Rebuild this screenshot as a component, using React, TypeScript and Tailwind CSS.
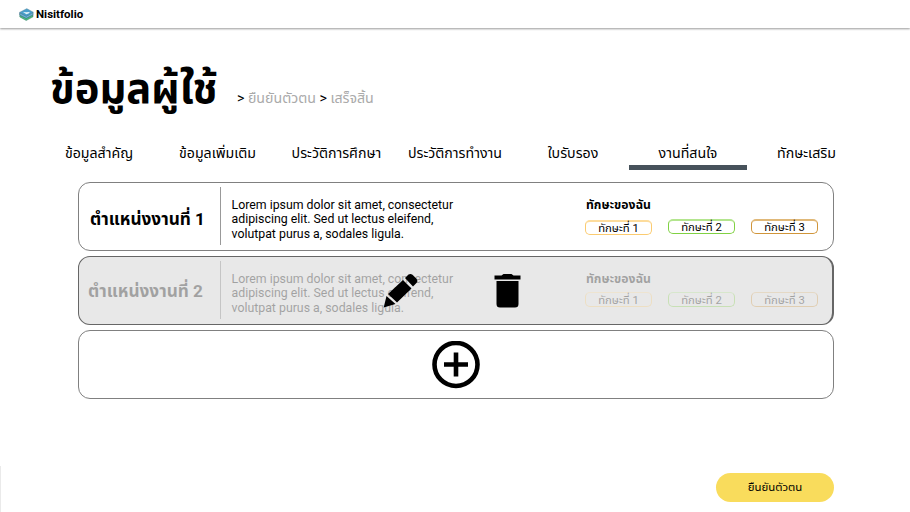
import React from "react";

const tabs = [
  { label: "ข้อมูลสำคัญ", box: "w-[118px]" },
  { label: "ข้อมูลเพิ่มเติม", box: "w-[119px]" },
  { label: "ประวัติการศึกษา", box: "w-[119px]" },
  { label: "ประวัติการทำงาน", box: "w-[118px]" },
  { label: "ใบรับรอง", box: "w-[118px]" },
  { label: "งานที่สนใจ", box: "w-[118px] -ml-[3px]", active: true },
  { label: "ทักษะเสริม", box: "w-[119px]" },
];

function Logo() {
  return (
    <svg className="h-[13px] w-[15px]" viewBox="0 0 15 13">
      <path d="M.8 7.2v1.7l6.4 3.6 6.8-3.7V6.9L7.3 10z" fill="#45c17c" stroke="#3a7b6c" strokeWidth=".5" />
      <path d="M.6 4.8v2.1l6.6 3.5 6.9-3.6V4.4L7.3 8z" fill="#6ab4d4" stroke="#315c73" strokeWidth=".5" />
      <path d="M.6 4.4 7.8.7l6.4 3.5-7 4z" fill="#49a0ce" stroke="#3c7893" strokeWidth=".5" />
      <path d="m4 4 3.2.3 3.6-.2-.8 1.2-2.6 1z" fill="#e7f6fb" />
    </svg>
  );
}

function Skill({ n, color, drop, muted }: { n: number; color: string; drop: boolean; muted: boolean }) {
  return (
    <div className={`flex h-[15px] w-[67px] shrink-0 items-center justify-center rounded-[5px] border pt-[2px] text-[11.3px] leading-none ${color} ${drop ? "mt-px" : ""} ${muted ? "" : "border-t-2"}`}>
      <span className={muted ? "" : "-mt-px"}>ทักษะที่ {n}</span>
    </div>
  );
}

function Job({ n }: { n: number }) {
  const muted = n === 2;
  return (
    <div className={`flex h-full ${muted ? "opacity-30" : ""}`}>
      <div className={`mt-[4px] mb-[5px] flex w-[142px] shrink-0 items-center justify-center border-r text-[17.2px] font-bold ${muted ? "border-[#777] pt-[3px] pr-[8px]" : "border-[#999] pt-[8px] pr-[4px]"}`}>
        <span>ตำแหน่งงานที่ {n}</span>
      </div>
      <p className="w-[354px] shrink-0 pt-[15px] pl-[10.5px] text-[12.33px] leading-[14.4px]">
        Lorem ipsum dolor sit amet, consectetur
        <br />
        adipiscing elit. Sed ut lectus eleifend,
        <br />
        volutpat purus a, sodales ligula.
      </p>
      <div className="w-[250px] pt-[13px] pl-[10px]">
        <h3 className="h-[18px] pl-px text-[12.2px] leading-[19px] font-bold">ทักษะของฉัน</h3>
        <div className={`flex gap-[16px] ${muted ? "mt-[4px]" : "mt-[5px]"}`}>
          <Skill n={1} color="border-[#fbcb70] border-t-[#fddc9c]" drop={!muted} muted={muted} />
          <Skill n={2} color="border-[#80d143] border-t-[#b3e58e]" drop={false} muted={muted} />
          <Skill n={3} color="border-[#d0953a] border-t-[#e0b878]" drop={false} muted={muted} />
        </div>
      </div>
    </div>
  );
}

export default function App() {
  return (
    <div className="relative flex h-[512px] w-[910px] flex-col overflow-hidden bg-white text-black [font-family:Roboto,'Noto_Sans_Thai','Noto_Sans',sans-serif]">
      <header className="flex h-[28px] shrink-0 items-center gap-[2px] pl-[19px] shadow-[0_1px_2px_rgba(0,0,0,0.4)]">
        <Logo />
        <span className="pt-px text-[11.5px] font-bold">Nisitfolio</span>
      </header>

      <div className="flex h-[112px] shrink-0 items-baseline pl-[50px]">
        <h1 className="w-[187px] text-[41.7px] leading-[121px] font-bold whitespace-nowrap">ข้อมูลผู้ใช้</h1>
        <p className="text-[14.2px] whitespace-nowrap text-[#aaa]">
          <span className="text-black">&gt;</span> ยืนยันตัวตน <span className="text-black">&gt;</span> เสร็จสิ้น
        </p>
      </div>

      <nav className="ml-[40px] flex h-[42px] shrink-0">
        {tabs.map((t) => (
          <div key={t.label} className={`flex h-[30px] shrink-0 items-center justify-center pt-[3px] text-[14.2px] whitespace-nowrap ${t.box} ${t.active ? "border-b-[5px] border-[#47525b]" : "border-b-[5px] border-transparent"}`}>
            {t.label}
          </div>
        ))}
      </nav>

      <main className="ml-[78px] flex w-[756px] flex-col gap-[5px]">
        <section className="h-[69px] rounded-[12px] border border-[#808080]">
          <Job n={1} />
        </section>
        <section className="relative h-[69px] rounded-[12px] border border-r-2 border-[#666] bg-[#e8e8e8]">
          <Job n={2} />
          <svg className="absolute top-[16px] left-[304px] h-[35px] w-[36px]" viewBox="0 0 36 35">
            <path d="M.7 34.5 3.5 23l9 8zM5 21 20 7l8.5 8.5L14 29.5zM22 5l3.5-3.500q2-1.300 4 .2l4 4q1.700 2 .2 4L30 13.500z" />
          </svg>
          <svg className="absolute top-[16px] left-[415px] h-[35px] w-[27px]" viewBox="0 0 27 35">
            <path d="M.5 2.500h7l2-1.500h8l2 1.500h7v4H.5zM2.500 8h22v23q0 3.500-3.500 3.500H6q-3.500 0-3.500-3.500z" />
          </svg>
        </section>
        <section className="flex h-[69px] items-center justify-center rounded-[12px] border border-[#808080]">
          <svg className="h-[48px] w-[48px]" viewBox="0 0 48 48" fill="none" stroke="#000">
            <circle cx="24" cy="23.5" r="21.5" strokeWidth="4.6" />
            <path d="M24 11.500v24M12 23.500h24" strokeWidth="4.6" />
          </svg>
        </section>
      </main>

      <footer className="mt-auto flex h-[46px] border-l border-[#eaeaea] pt-[7px] pl-[715px]">
        <button className="h-[29px] w-[118px] rounded-full bg-[#f9dc5c] text-[11.4px]">ยืนยันตัวตน</button>
      </footer>
    </div>
  );
}
